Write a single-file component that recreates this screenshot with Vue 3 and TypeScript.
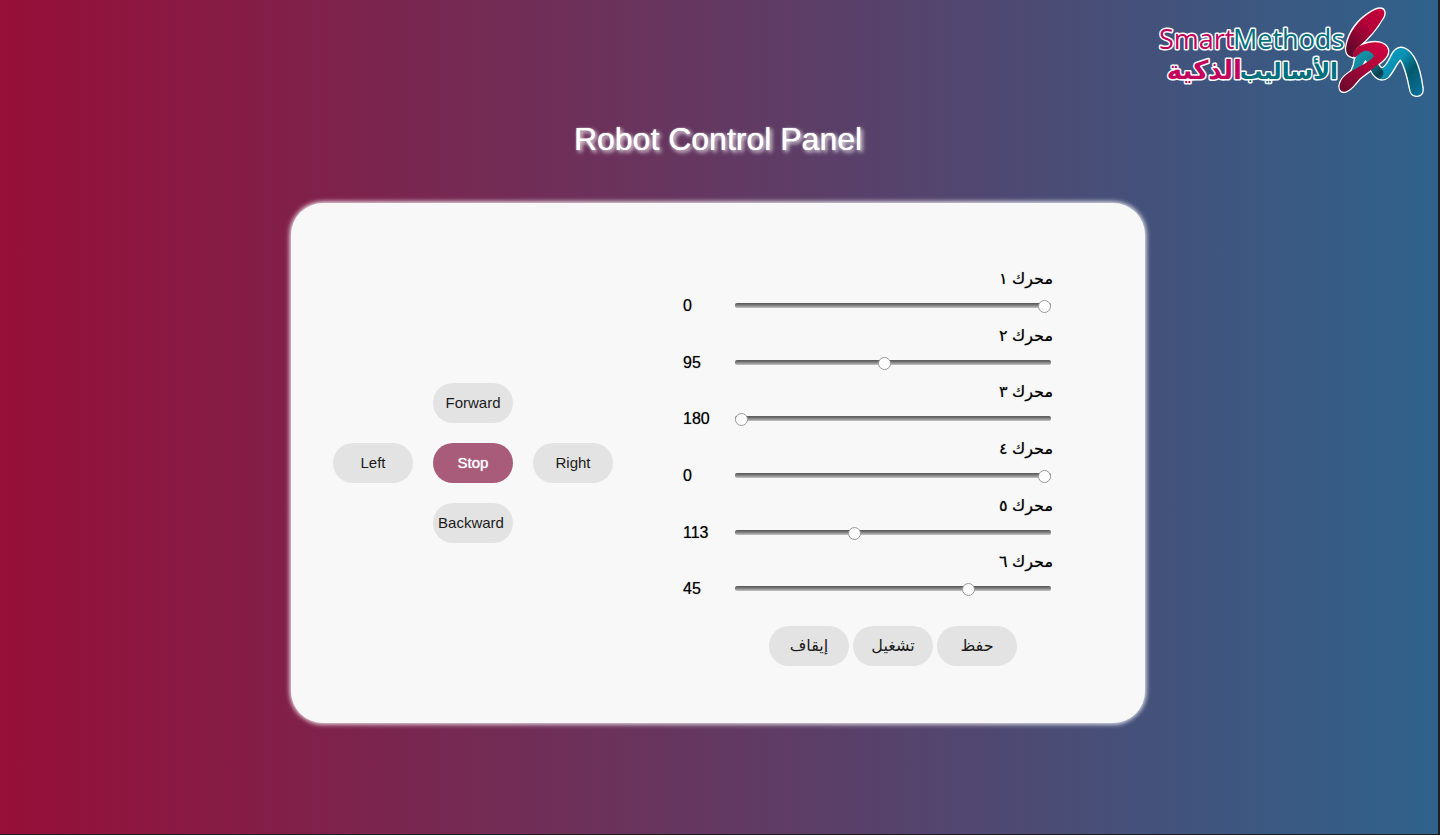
<script setup lang="ts">
import { ref } from 'vue'

interface Motor {
  id: number
  label: string
  value: number
}

interface Direction {
  name: string
  area: string
}

const motors = ref<Motor[]>([
  { id: 1, label: 'محرك ١', value: 0 },
  { id: 2, label: 'محرك ٢', value: 95 },
  { id: 3, label: 'محرك ٣', value: 180 },
  { id: 4, label: 'محرك ٤', value: 0 },
  { id: 5, label: 'محرك ٥', value: 113 },
  { id: 6, label: 'محرك ٦', value: 45 },
])

const directions: Direction[] = [
  { name: 'Forward', area: 'forward' },
  { name: 'Left', area: 'left' },
  { name: 'Stop', area: 'stop' },
  { name: 'Right', area: 'right' },
  { name: 'Backward', area: 'backward' },
]

const actions: string[] = ['حفظ', 'تشغيل', 'إيقاف']
</script>

<template>
  <div class="page">
    <header class="top">
      <svg class="logo" viewBox="0 0 290 110" role="img" aria-label="Smart Methods">
        <defs>
          <linearGradient id="redTop" x1="1" y1="0" x2="0.2" y2="1">
            <stop offset="0" stop-color="#c8003c" />
            <stop offset="0.45" stop-color="#b00038" />
            <stop offset="1" stop-color="#5c0a2a" />
          </linearGradient>
          <linearGradient id="redLow" x1="1" y1="0" x2="0" y2="1">
            <stop offset="0" stop-color="#d8043f" />
            <stop offset="0.5" stop-color="#a80638" />
            <stop offset="1" stop-color="#650a2c" />
          </linearGradient>
          <linearGradient id="tealLeft" x1="0" y1="0" x2="1" y2="1">
            <stop offset="0" stop-color="#1da3ba" />
            <stop offset="0.45" stop-color="#0f8298" />
            <stop offset="0.7" stop-color="#0a3f50" />
            <stop offset="1" stop-color="#0b8dab" />
          </linearGradient>
          <linearGradient id="tealRight" x1="0" y1="0" x2="1" y2="1">
            <stop offset="0" stop-color="#0ba0c6" />
            <stop offset="0.35" stop-color="#0892b4" />
            <stop offset="0.6" stop-color="#045a6c" />
            <stop offset="1" stop-color="#0873a0" />
          </linearGradient>
        </defs>
        <g class="latin">
          <text class="teal" x="83" y="49">Methods</text>
          <text class="magenta" x="9" y="49">Smart</text>
        </g>
        <g class="arabic">
          <text class="teal" x="188" y="79">الأساليب</text>
          <text class="magenta wide" x="92" y="79">الذكية</text>
        </g>
        <svg x="180" y="0" width="110" height="105" viewBox="0 0 330 315">
          <g class="outline">
            <path d="M150 26C165 26 167 42 157 56C140 85 115 115 88 138C110 128 135 124 150 128C175 135 182 155 165 175C150 192 115 215 90 235C75 250 65 270 45 275C30 277 25 262 31 248C38 228 60 215 80 205C105 190 125 178 135 165C115 160 95 175 70 172C48 168 46 150 50 135C58 95 85 60 120 38C132 30 142 26 150 26Z" />
            <path d="M72 194C74 168 88 150 110 150C127 150 133 166 139 180C145 195 150 206 158 205C170 200 178 180 186 165C195 148 208 140 224 146C255 160 270 210 277 262C280 280 272 288 258 287C246 286 242 278 240 265C234 235 226 200 212 178C200 185 190 215 175 230C160 242 145 240 132 225C120 210 118 190 106 180C96 195 90 215 76 240C66 257 54 268 42 270Z" />
          </g>
          <path fill="url(#tealLeft)" d="M42 270L72 194C74 168 88 150 110 150C127 150 133 166 139 180C145 195 150 206 158 205L175 230C160 242 145 240 132 225C120 210 118 190 106 180C96 195 90 215 76 240C66 257 54 268 42 270Z" />
          <path fill="url(#tealRight)" d="M154 206C170 200 178 180 186 165C195 148 208 140 224 146C255 160 270 210 277 262C280 280 272 288 258 287C246 286 242 278 240 265C234 235 226 200 212 178C200 185 190 215 175 230C168 235 158 238 150 236C162 228 164 214 154 206Z" />
          <path fill="url(#redTop)" d="M150 26C165 26 167 42 157 56C140 85 115 115 88 138C76 148 68 160 70 172C48 168 46 150 50 135C58 95 85 60 120 38C132 30 142 26 150 26Z" />
          <path fill="url(#redLow)" d="M88 138C110 128 135 124 150 128C175 135 182 155 165 175C150 192 115 215 90 235C75 250 65 270 45 275C30 277 25 262 31 248C38 228 60 215 80 205C105 190 122 182 132 168C124 154 110 148 96 156C88 160 82 168 76 172C62 172 70 150 88 138Z" />
        </svg>
      </svg>
    </header>

    <h1 class="title">Robot Control Panel</h1>

    <main class="panel">
      <div class="pad">
        <button
          v-for="d in directions"
          :key="d.area"
          type="button"
          class="pill"
          :class="d.area"
        >
          {{ d.name }}
        </button>
      </div>

      <div class="motors">
        <div class="list">
          <div v-for="m in motors" :key="m.id" class="motor">
            <label class="name" :for="`motor-${m.id}`" lang="ar" dir="rtl">{{ m.label }}</label>
            <output class="value" :for="`motor-${m.id}`">{{ m.value }}</output>
            <input
              :id="`motor-${m.id}`"
              v-model.number="m.value"
              class="slider"
              type="range"
              min="0"
              max="180"
              dir="rtl"
            />
          </div>
        </div>
        <div class="actions" dir="rtl" lang="ar">
          <button v-for="a in actions" :key="a" type="button" class="pill">{{ a }}</button>
        </div>
      </div>
    </main>
  </div>
</template>

<style>
body {
  background: #1f1f1f;
}
</style>

<style scoped>
.page {
  box-sizing: border-box;
  min-height: calc(100vh - 1px);
  margin-right: 2px;
  padding: 0 2px 40px 0;
  background: linear-gradient(to right, #960f38, #2f628b);
  font-family: "Liberation Sans", Arial, "DejaVu Sans", sans-serif;
  color: #000;
}

.top {
  display: flex;
  justify-content: flex-end;
  margin-right: -4px;
}

.logo {
  display: block;
  width: 290px;
  height: 110px;
}

.logo text {
  stroke: #fff;
  stroke-width: 3px;
  stroke-linejoin: round;
  paint-order: stroke;
}

.latin {
  font: 500 27px "Open Sans", "Noto Sans", sans-serif;
}

.arabic {
  font: bold 23px "DejaVu Sans", sans-serif;
  direction: rtl;
}

.wide {
  font-size: 26px;
}

.magenta {
  fill: #c4005c;
}

.teal {
  fill: #00707c;
}

.outline {
  fill: #fff;
  stroke: #fff;
  stroke-width: 8px;
  stroke-linejoin: round;
}

.title {
  margin: 10px 0 0;
  font-size: 32px;
  font-weight: 400;
  line-height: 38px;
  text-align: center;
  color: #fff;
  text-shadow: 0 0 1px #fff, 2px 2px 4px #fff;
}

.panel {
  box-sizing: border-box;
  display: flex;
  align-items: center;
  gap: 70px;
  max-width: 854px;
  min-height: 520px;
  margin: 45px auto 0;
  padding: 56px 92px 56px 42px;
  border-radius: 32px;
  background: #f8f8f8;
  box-shadow: 0 0 5px 1px #fff;
}

.pad {
  display: grid;
  grid-template-columns: repeat(3, 80px);
  grid-template-areas:
    ". forward ."
    "left stop right"
    ". backward .";
  gap: 20px;
}

.pill {
  width: 80px;
  height: 40px;
  padding: 0;
  border: 0;
  border-radius: 20px;
  background: #e3e3e3;
  color: #1c1c1c;
  font-family: inherit;
  font-size: 15px;
  line-height: 20px;
  cursor: pointer;
}

.forward {
  grid-area: forward;
}

.left {
  grid-area: left;
}

.stop {
  grid-area: stop;
  background: #a85c7a;
  color: #fff;
  text-shadow: 0 0 1px #fff;
}

.right {
  grid-area: right;
}

.backward {
  grid-area: backward;
  padding-right: 4px;
}

.motors {
  flex: 1;
}

.list {
  display: grid;
  grid-auto-rows: 1fr;
  height: 340px;
  padding-top: 6px;
}

.motor {
  display: grid;
  grid-template-columns: 52px 1fr;
  grid-template-rows: 26px 27px;
  align-items: center;
}

.name {
  grid-column: 1 / -1;
  font-size: 16px;
  line-height: 26px;
}

.name,
.value {
  text-shadow: 0 0 1px rgba(0, 0, 0, 0.5);
}

.value {
  font-size: 16px;
  line-height: 27px;
}

.slider {
  appearance: none;
  min-width: 0;
  height: 5px;
  margin: 0 2px 0 0;
  border-radius: 2px;
  background: linear-gradient(#555, #777 40%, #c4c4c4);
}

.slider::-webkit-slider-thumb {
  appearance: none;
  position: relative;
  top: 1px;
  box-sizing: border-box;
  width: 13px;
  height: 13px;
  border: 1px solid #999;
  border-radius: 50%;
  background: #fff;
}

.actions {
  display: flex;
  justify-content: center;
  gap: 4px;
  margin-top: 20px;
  padding: 0 2px 0 52px;
}

.actions .pill {
  font-size: 16px;
}
</style>
